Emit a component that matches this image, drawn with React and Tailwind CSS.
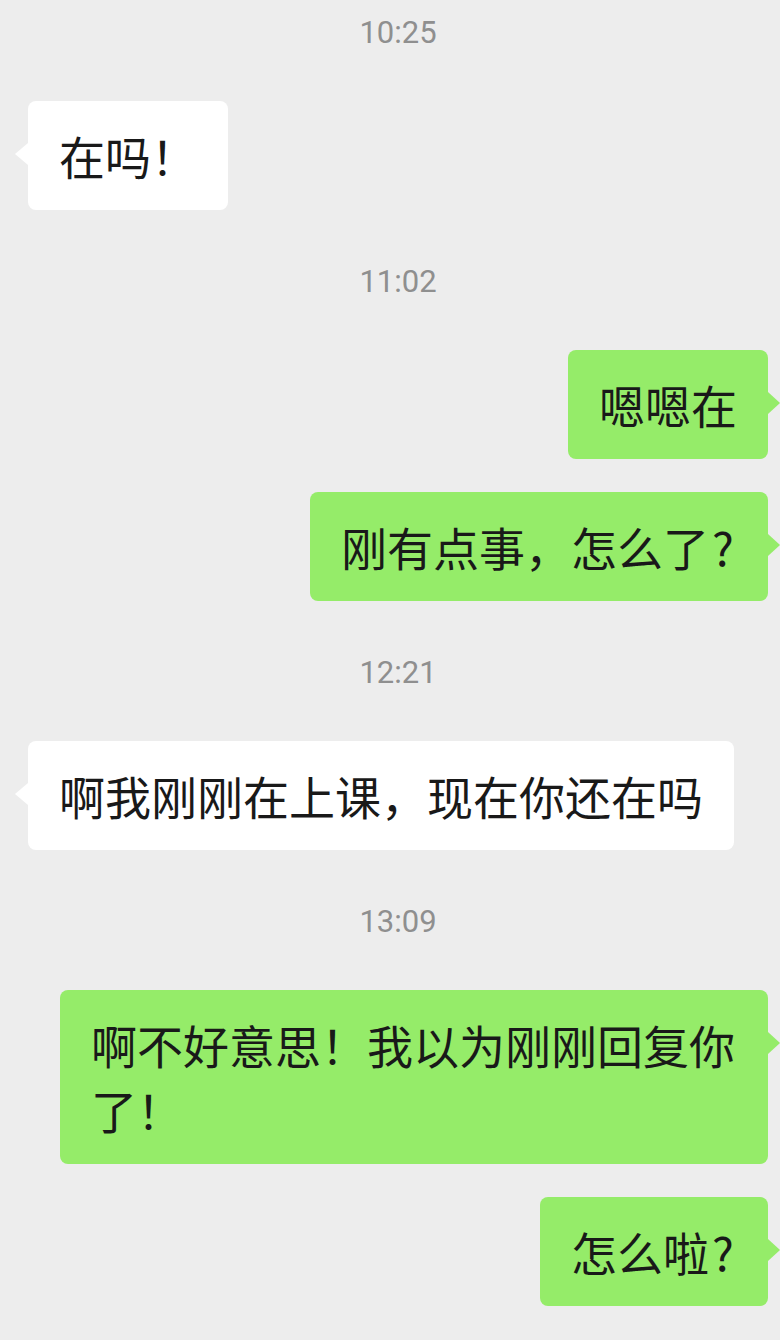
import React from "react";

const messages = [
  { type: "time", text: "10:25" },
  { type: "in", text: "在吗！" },
  { type: "time", text: "11:02" },
  { type: "out", text: "嗯嗯在" },
  { type: "out", text: "刚有点事，怎么了", q: true },
  { type: "time", text: "12:21" },
  { type: "in", text: "啊我刚刚在上课，现在你还在吗" },
  { type: "time", text: "13:09" },
  { type: "out", text: "啊不好意思！我以为刚刚回复你了！" },
  { type: "out", text: "怎么啦", q: true },
];

const Bubble = ({ mine, children }) => (
  <div
    className={`relative max-w-[708px] rounded-[8px] px-[31px] pt-[22px] pb-[22px] text-[46px] leading-[65px] text-[#191919] ${
      mine ? "self-end mr-[12px] bg-[#95ec69]" : "self-start ml-[28px] bg-white"
    }`}
  >
    {mine ? (
      <span className="absolute right-[-12px] top-[42px] h-0 w-0 border-y-[11px] border-l-[12px] border-y-transparent border-l-[#95ec69]" />
    ) : (
      <span className="absolute left-[-13px] top-[42px] h-0 w-0 border-y-[11px] border-r-[13px] border-y-transparent border-r-white" />
    )}
    {children}
  </div>
);

export default function App() {
  return (
    <div
      className="flex min-h-[1340px] w-full flex-col bg-[#ededed] pt-[13px] pb-[33px]"
      style={{ fontFamily: '"Noto Sans CJK SC", "Noto Sans", sans-serif' }}
    >
      {messages.map((m, i) => {
        if (m.type === "time") {
          return (
            <div
              key={i}
              className={`mb-[48px] pl-[16px] text-center text-[31px] leading-[40px] text-[#8f8f8f] ${i > 0 ? "mt-[52px]" : ""}`}
              style={{ fontFamily: "Roboto, sans-serif" }}
            >
              {m.text}
            </div>
          );
        }
        const prev = messages[i - 1];
        return (
          <div key={i} className={`flex flex-col ${prev && prev.type !== "time" ? "mt-[33px]" : ""}`}>
            <Bubble mine={m.type === "out"}>
              {m.text}
              {m.q && <span className="inline-block w-[28px] text-center">?</span>}
            </Bubble>
          </div>
        );
      })}
    </div>
  );
}
